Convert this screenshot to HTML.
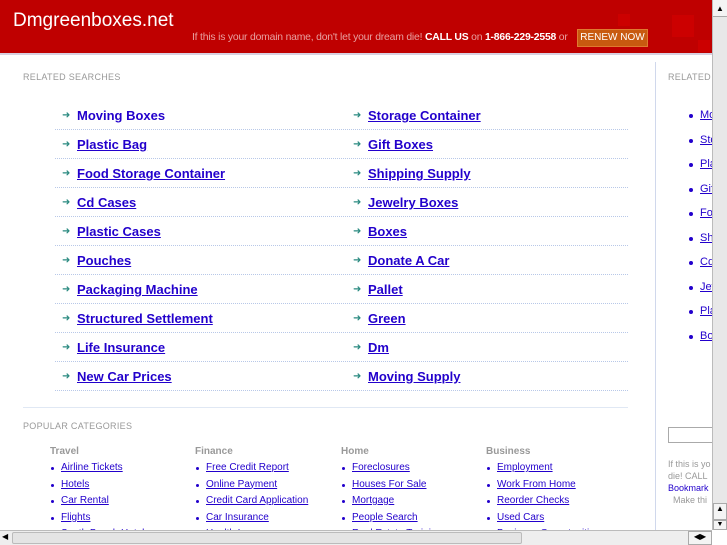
<!DOCTYPE html>
<html><head><style>
*{margin:0;padding:0;box-sizing:border-box}
body{width:727px;height:545px;overflow:hidden;background:#fff;font-family:"Liberation Sans",Arial,sans-serif;position:relative}
.hdr{position:absolute;left:0;top:0;width:712px;height:55px;background:#bf0000;border-bottom:2px solid #d8d0e0}
.hdr .t{position:absolute;left:13px;top:10px;color:#fff;font-size:19px}
.hdr .m{position:absolute;left:192px;top:32px;color:#e8a0a0;font-size:10.4px;letter-spacing:-0.2px}
.hdr .m b{color:#fff;font-weight:bold}
.btn{position:absolute;left:577px;top:29px;width:71px;height:18px;background:#c85a10;border:1px solid #e07a30;color:#fff;font-size:10px;text-align:center;line-height:16px}
.sq{position:absolute;background:#cc0000}
.lbl{position:absolute;font-size:9px;color:#999;letter-spacing:.3px}
.row{position:absolute;font-size:13px;font-weight:bold;color:#2200cc}
.row a{color:#2200cc;text-decoration:underline}
.arr{position:absolute;color:#2a8a80;font-size:10px}
.sep{position:absolute;left:55px;width:573px;border-top:1px dotted #b8c8e8}
.ch{position:absolute;font-size:10px;font-weight:bold;color:#999}
.cl{position:absolute;font-size:10px;color:#2200cc;text-decoration:underline}
.dot{position:absolute;width:4px;height:4px;border-radius:2px;background:#2200cc}
.vs{position:absolute;left:712px;top:0;width:15px;height:530px;background:#e8e8e8;border-left:1px solid #bbb}
.hs{position:absolute;left:0;top:530px;width:712px;height:15px;background:#eee;border-top:1px solid #bbb}
</style></head><body>
<div class="hdr">
<div class="sq" style="left:618px;top:14px;width:12px;height:12px"></div>
<div class="sq" style="left:672px;top:15px;width:22px;height:22px"></div>
<div class="sq" style="left:698px;top:40px;width:12px;height:12px"></div>
<div class="t">Dmgreenboxes.net</div>
<div class="m">If this is your domain name, don't let your dream die! <b>CALL US</b> on <b>1-866-229-2558</b> or</div>
<div class="btn">RENEW NOW</div>
</div>
<div class="lbl" style="left:23px;top:72px">RELATED SEARCHES</div>
<div style="position:absolute;left:655px;top:62px;height:470px;border-left:1px solid #d0d8ec"></div>
<div class="lbl" style="left:668px;top:72px">RELATED</div>

<div id="rows"></div>
<script>
var L=["Moving Boxes","Plastic Bag","Food Storage Container","Cd Cases","Plastic Cases","Pouches","Packaging Machine","Structured Settlement","Life Insurance","New Car Prices"];
var R=["Storage Container","Gift Boxes","Shipping Supply","Jewelry Boxes","Boxes","Donate A Car","Pallet","Green","Dm","Moving Supply"];
var h="";
for(var i=0;i<10;i++){var y=108+i*29;
h+='<div class="arr" style="left:62px;top:'+(y+2)+'px">&#10140;</div><div class="row" style="left:77px;top:'+y+'px"><a'+(i==0?' style="text-decoration:none"':'')+'>'+L[i]+'</a></div>';
h+='<div class="arr" style="left:353px;top:'+(y+2)+'px">&#10140;</div><div class="row" style="left:368px;top:'+y+'px"><a>'+R[i]+'</a></div>';
h+='<div class="sep" style="top:'+(y+21)+'px"></div>';}
var rs=["Mo","Sto","Pla","Gif","Foo","Sh","Cd","Jew","Pla","Bo"];
for(var i=0;i<10;i++){var y=109+i*24.5;h+='<div class="dot" style="left:689px;top:'+(y+5)+'px"></div><div class="cl" style="left:700px;top:'+y+'px;font-size:11px">'+rs[i]+'</div>';}
var C=[["Travel",50,["Airline Tickets","Hotels","Car Rental","Flights","South Beach Hotels"]],["Finance",195,["Free Credit Report","Online Payment","Credit Card Application","Car Insurance","Health Insurance"]],["Home",341,["Foreclosures","Houses For Sale","Mortgage","People Search","Real Estate Training"]],["Business",486,["Employment","Work From Home","Reorder Checks","Used Cars","Business Opportunities"]]];
for(var c=0;c<4;c++){var x=C[c][1];h+='<div class="ch" style="left:'+x+'px;top:446px">'+C[c][0]+'</div>';
for(var j=0;j<5;j++){var y=462+j*16.5;h+='<div class="dot" style="left:'+(x+1)+'px;top:'+(y+5)+'px;width:3px;height:3px"></div><div class="cl" style="left:'+(x+11)+'px;top:'+y+'px">'+C[c][2][j]+'</div>';}}
document.getElementById("rows").innerHTML=h;
</script>
<div class="sep" style="left:23px;width:605px;top:407px;border-top:1px solid #e0e8f4"></div>
<div class="lbl" style="left:23px;top:421px">POPULAR CATEGORIES</div>
<div style="position:absolute;left:668px;top:427px;width:50px;height:16px;border:1px solid #aaa"></div>
<div style="position:absolute;left:668px;top:458px;font-size:9px;color:#999;line-height:12px">If this is yo<br>die! CALL<br><span style="color:#2200cc">Bookmark</span><br>&nbsp;&nbsp;Make thi</div>
<div class="vs"><div style="height:17px;border-bottom:1px solid #aaa;background:#f4f4f4;font-size:8px;text-align:center;line-height:17px">&#9650;</div>
<div style="position:absolute;top:503px;left:0;width:14px;height:17px;background:#f4f4f4;border:1px solid #aaa;font-size:8px;text-align:center">&#9650;</div>
<div style="position:absolute;top:520px;left:0;width:14px;height:10px;background:#f4f4f4;border:1px solid #aaa;font-size:7px;text-align:center">&#9660;</div></div>
<div class="hs"><div style="position:absolute;left:12px;top:1px;width:510px;height:12px;background:#e4e4e4;border:1px solid #bbb;border-radius:2px"></div>
<div style="position:absolute;left:2px;top:1px;font-size:8px">&#9664;</div>
<div style="position:absolute;left:688px;top:0;width:24px;height:14px;font-size:8px;border:1px solid #aaa;background:#f4f4f4;text-align:center">&#9664;&#9654;</div></div>
</body></html>
